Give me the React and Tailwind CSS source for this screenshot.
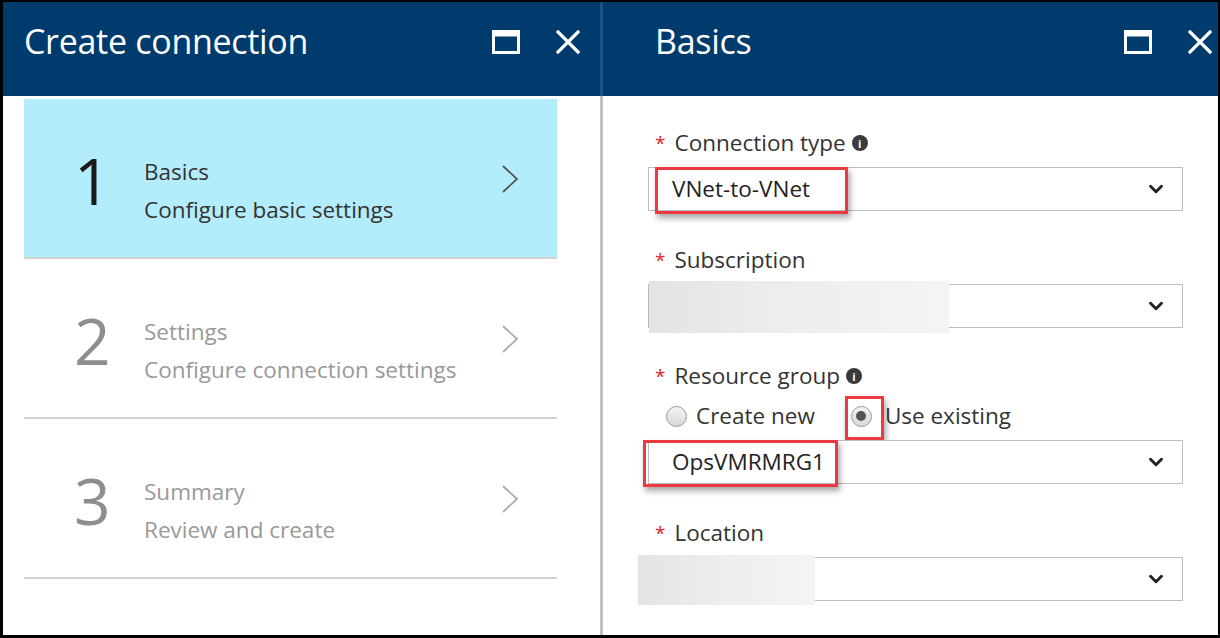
import React from 'react'
import { ChevronDown } from 'lucide-react'

const font = { fontFamily: '"Open Sans", "Noto Sans", sans-serif' }

const MaxIcon = () => (
  <svg width="28" height="24" viewBox="0 0 28 24">
    <rect x="1.5" y="1.5" width="25" height="21" fill="none" stroke="white" strokeWidth="3" />
    <rect x="1.5" y="1.5" width="25" height="5" fill="white" />
  </svg>
)

const CloseIcon = () => (
  <svg width="24" height="24" viewBox="0 0 24 24">
    <path d="M2 2 L22 22 M22 2 L2 22" stroke="white" strokeWidth="3.2" strokeLinecap="square" />
  </svg>
)

const ChevronRight = ({ color }) => (
  <svg width="18" height="28" viewBox="0 0 18 28">
    <path d="M2 1 L16 14 L2 27" fill="none" stroke={color} strokeWidth="1.8" />
  </svg>
)

const Header = ({ title, pad }) => (
  <div className={`h-[94px] bg-[#003b6e] flex items-start pt-[17px] ${pad}`}>
    <div className="flex-1 text-white text-[34px] leading-[44px] tracking-[-0.3px]">{title}</div>
    <div className="flex items-center gap-[36px] pt-[11px]">
      <MaxIcon />
      <CloseIcon />
    </div>
  </div>
)

const steps = [
  { n: '1', title: 'Basics', sub: 'Configure basic settings', active: true },
  { n: '2', title: 'Settings', sub: 'Configure connection settings' },
  { n: '3', title: 'Summary', sub: 'Review and create' }
]

const InfoDot = () => (
  <span className="inline-flex w-[16px] h-[16px] rounded-full bg-[#3b3b3b] text-white text-[11px] font-bold items-center justify-center leading-none ml-[6px]">
    i
  </span>
)

const Label = ({ children, info }) => (
  <div className="flex items-center pl-[7px] text-[22.5px] text-[#333] leading-[30px]">
    <span className="text-[#e0252c] mr-[9px] text-[19px]">*</span>
    <span>{children}</span>
    {info && <InfoDot />}
  </div>
)

const Select = ({ children }) => (
  <div className="h-[44px] border border-[#bdbdbd] bg-white flex items-center">
    <div className="flex-1 pl-[23px] text-[22.5px] text-[#222]">{children}</div>
    <ChevronDown size={22} strokeWidth={3.2} className="text-[#222] mr-[15px]" />
  </div>
)

const RedBox = ({ className }) => (
  <div className={`absolute border-[3px] border-[#ec3a40] shadow-[2px_4px_6px_rgba(0,0,0,0.35)] ${className}`} />
)

const Blur = ({ className }) => (
  <div className={`absolute bg-gradient-to-r from-[#e4e4e4] via-[#eeeeee] to-[#f4f4f4] ${className}`} />
)

const Radio = ({ checked }) => (
  <span className="w-[21px] h-[21px] rounded-full border border-[#9a9a9a] bg-gradient-to-b from-[#f4f4f4] to-[#d8d8d8] flex items-center justify-center">
    {checked && <span className="w-[10px] h-[10px] rounded-full bg-[#555]" />}
  </span>
)

export default function App() {
  return (
    <div className="w-[1220px] h-[638px] bg-black pl-[3px] pt-[2px] pr-[2px] pb-[3px]" style={font}>
      <div className="w-full h-full bg-white flex">
        {/* Left blade */}
        <div className="w-[597px] flex flex-col">
          <Header title="Create connection" pad="pl-[21px] pr-[20px]" />
          <div className="pl-[21px] pr-[43px] pt-[3px]">
            {steps.map(s => (
              <div
                key={s.n}
                className={`h-[160px] flex items-center border-b-2 border-[#d4d4d4] ${s.active ? 'bg-[#b3ecfa]' : ''}`}
              >
                <div className={`w-[120px] pl-[50px] pt-[6px] text-[64px] font-medium leading-none ${s.active ? 'text-[#1a1a1a]' : 'text-[#8e8e8e]'}`}>
                  {s.n}
                </div>
                <div className={`flex-1 mt-[26px] text-[22.5px] leading-[38px] ${s.active ? 'text-[#333]' : 'text-[#999]'}`}>
                  <div>{s.title}</div>
                  <div>{s.sub}</div>
                </div>
                <div className="pr-[38px] pt-[2px]">
                  <ChevronRight color={s.active ? '#555' : '#aaa'} />
                </div>
              </div>
            ))}
          </div>
        </div>

        {/* Divider */}
        <div className="w-[3px] flex flex-col">
          <div className="h-[94px] bg-[#1d5289]" />
          <div className="flex-1 bg-[#c2c2c2]" />
        </div>

        {/* Right blade */}
        <div className="flex-1 flex flex-col">
          <Header title="Basics" pad="pl-[52px] pr-[6px]" />
          <div className="pl-[45px] pr-[35px] pt-[32px]">
            <Label info>Connection type</Label>
            <div className="relative mt-[9px]">
              <Select>VNet-to-VNet</Select>
              <RedBox className="left-[7px] top-0 w-[193px] h-[47px]" />
            </div>

            <div className="mt-[34px]">
              <Label>Subscription</Label>
              <div className="relative mt-[9px]">
                <Select>&nbsp;</Select>
                <Blur className="left-[1px] top-[-3px] w-[300px] h-[52px]" />
              </div>
            </div>

            <div className="mt-[33px]">
              <Label info>Resource group</Label>
              <div className="relative flex items-center h-[36px] mt-[7px] pl-[18px] text-[22.5px] text-[#333]">
                <Radio />
                <span className="ml-[9px]">Create new</span>
                <span className="ml-[36px]">
                  <Radio checked />
                </span>
                <span className="ml-[13px]">Use existing</span>
                <RedBox className="left-[197px] top-[-2px] w-[39px] h-[44px]" />
              </div>
              <div className="relative mt-[6px]">
                <Select>OpsVMRMRG1</Select>
                <RedBox className="left-[-5px] top-0 w-[195px] h-[47px]" />
              </div>
            </div>

            <div className="mt-[34px]">
              <Label>Location</Label>
              <div className="relative mt-[9px]">
                <Select>&nbsp;</Select>
                <Blur className="left-[-10px] top-[-2px] w-[177px] h-[50px]" />
              </div>
            </div>
          </div>
        </div>
      </div>
    </div>
  )
}
